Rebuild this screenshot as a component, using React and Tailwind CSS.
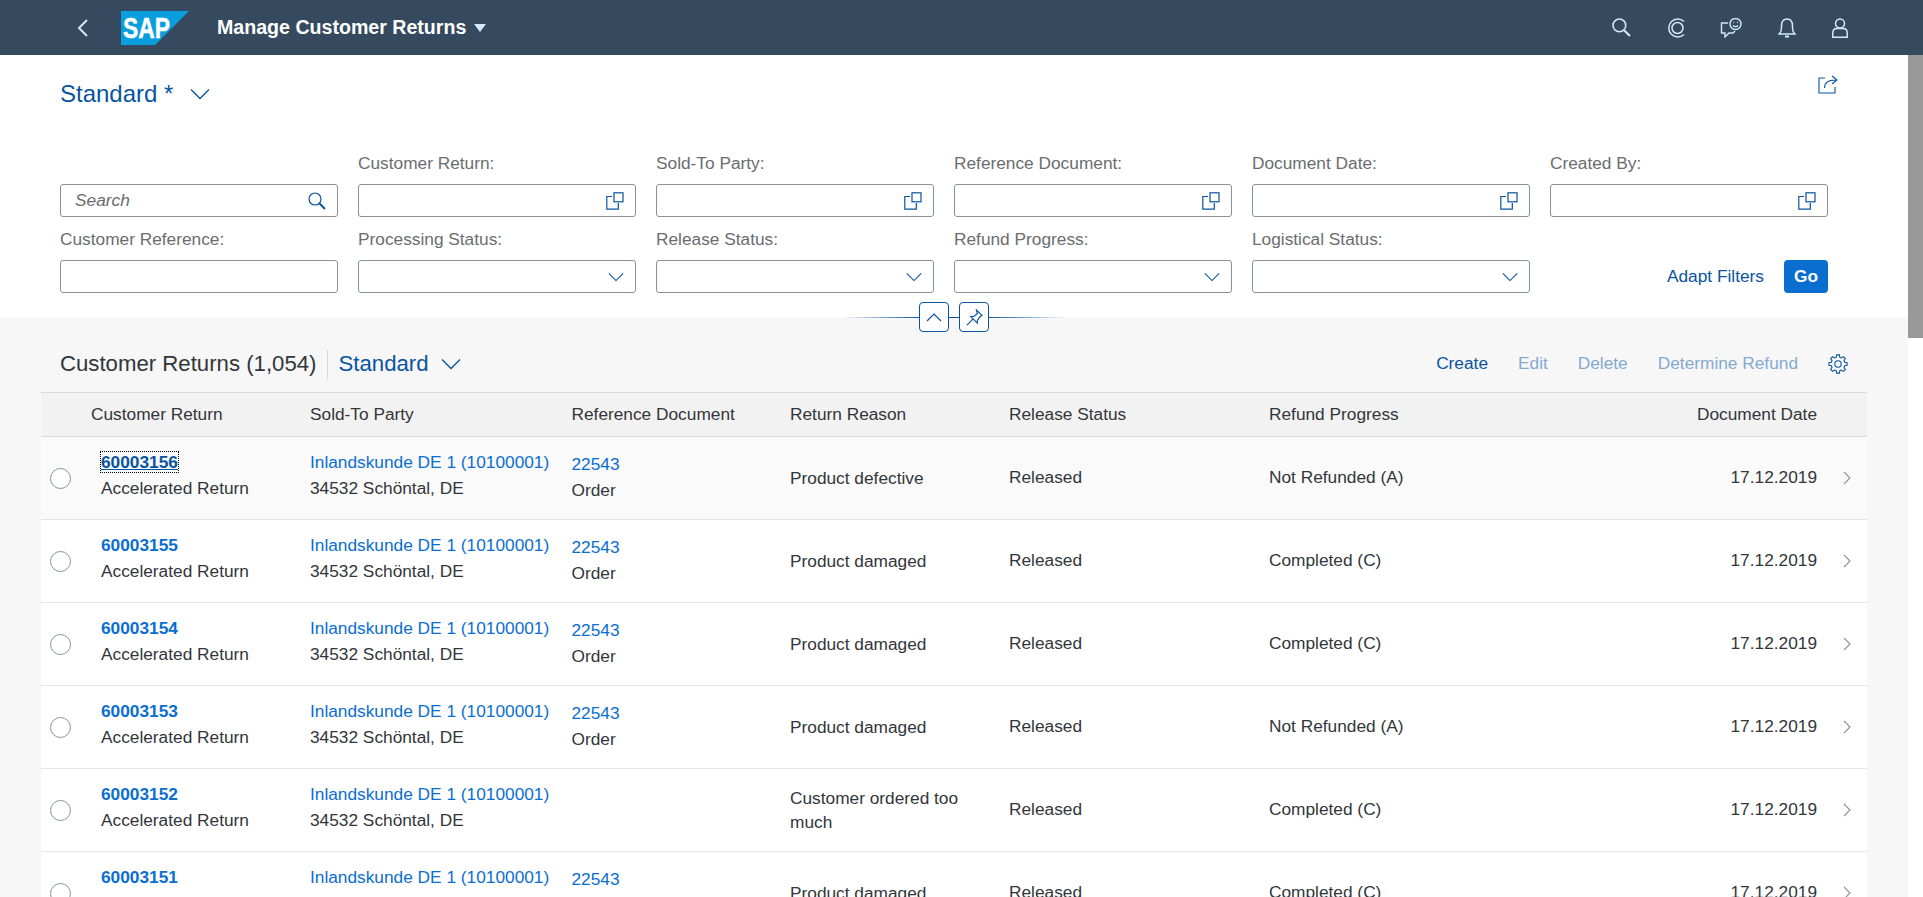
import React from "react";

const COLS =
  "grid grid-cols-[50px_219px_261.5px_218.5px_219px_260px_231px_317px_50px] items-center";

const rows = [
  { id: "60003156", ref: true, reason: "Product defective", refund: "Not Refunded (A)", focus: true },
  { id: "60003155", ref: true, reason: "Product damaged", refund: "Completed (C)" },
  { id: "60003154", ref: true, reason: "Product damaged", refund: "Completed (C)" },
  { id: "60003153", ref: true, reason: "Product damaged", refund: "Not Refunded (A)" },
  { id: "60003152", ref: false, reason: "Customer ordered too much", refund: "Completed (C)" },
  { id: "60003151", ref: true, reason: "Product damaged", refund: "Completed (C)" },
];

const filters = [
  { label: "", type: "search" },
  { label: "Customer Return:", type: "help" },
  { label: "Sold-To Party:", type: "help" },
  { label: "Reference Document:", type: "help" },
  { label: "Document Date:", type: "help" },
  { label: "Created By:", type: "help" },
  { label: "Customer Reference:", type: "text" },
  { label: "Processing Status:", type: "select" },
  { label: "Release Status:", type: "select" },
  { label: "Refund Progress:", type: "select" },
  { label: "Logistical Status:", type: "select" },
];

const Chevron = ({ className = "w-5 h-3" }) => (
  <svg viewBox="0 0 20 12" className={className} fill="none" stroke="#0854a0" strokeWidth="1.3">
    <path d="M1 1.500l9 9 9-9" />
  </svg>
);

const ValueHelp = () => (
  <svg viewBox="0 0 18 18" className="w-[18px] h-[18px]" fill="none" stroke="#0854a0" strokeWidth="1.2">
    <path d="M6 4.500H.8v12.700h11.500V11" />
    <rect x="8" y=".8" width="9" height="9" />
  </svg>
);

const SearchIcon = ({ color = "#0854a0", className = "w-[18px] h-[18px]", sw = "1.2" }) => (
  <svg viewBox="0 0 18 18" className={className} fill="none" stroke={color} strokeWidth={sw}>
    <circle cx="7" cy="7" r="6" />
    <path d="M11.500 11.500l5.500 5.500" strokeWidth="2" />
  </svg>
);

const Logo = () => (
  <svg viewBox="0 0 68 34" className="w-[68px] h-[34px]">
    <path d="M0 0h68L34 34H0z" fill="#0a9fdc" />
    <text
      x="2"
      y="27"
      fontFamily="Liberation Sans"
      fontWeight="700"
      fontSize="29"
      textLength="47"
      lengthAdjust="spacingAndGlyphs"
      stroke="#fff"
      strokeWidth=".5"
      fill="#fff"
    >
      SAP
    </text>
  </svg>
);

const Field = ({ label, type }) => (
  <div>
    <div className="h-[43px] flex items-end pb-[10px] text-[#6a6d70] leading-[22px]">{label}</div>
    <div className="h-[33px] bg-white border border-[#89919a] rounded-[3px] flex items-center justify-end pr-[11px]">
      {type === "search" && (
        <span className="flex-1 pl-[14px] italic text-[#6a6d70]">Search</span>
      )}
      {type === "search" && <SearchIcon />}
      {type === "help" && <ValueHelp />}
      {type === "select" && <Chevron className="w-[16px] h-[10px]" />}
    </div>
  </div>
);

const Row = ({ row }) => (
  <div className={`${COLS} h-[83px] border-b border-[#e5e5e5] text-[#32363a] ${row.focus ? "bg-[#fafafa]" : "bg-white"}`}>
    <div className="pl-[9px]">
      <div className="w-[21px] h-[21px] rounded-full border border-[#89919a] bg-white" />
    </div>
    <div className="pl-[10px] pb-[7px] leading-[26px]">
      <div>
        <span
          className={
            row.focus
              ? "font-bold text-[#0854a0] underline outline-1 outline-dotted outline-black"
              : "font-bold text-[#0a6ed1]"
          }
        >
          {row.id}
        </span>
      </div>
      <div>Accelerated Return</div>
    </div>
    <div className="pb-[7px] leading-[26px]">
      <div className="text-[#0a6ed1]">Inlandskunde DE 1 (10100001)</div>
      <div>34532 Schöntal, DE</div>
    </div>
    <div className="pb-[2px] leading-[26px]">
      {row.ref && <div className="text-[#0a6ed1]">22543</div>}
      {row.ref && <div>Order</div>}
    </div>
    <div className="pr-8 pb-px leading-[24px]">{row.reason}</div>
    <div>Released</div>
    <div>{row.refund}</div>
    <div className="text-right">17.12.2019</div>
    <div className="pl-[26px]">
      <svg viewBox="0 0 8 14" className="w-2 h-[14px]" fill="none" stroke="#89919a" strokeWidth="1.1">
        <path d="M1 1l6 6-6 6" />
      </svg>
    </div>
  </div>
);

export default function App() {
  return (
    <div className="h-screen overflow-hidden flex flex-col bg-white font-['Liberation_Sans',sans-serif] text-[17.3px]">
      {/* shell bar */}
      <header className="h-[55px] shrink-0 bg-[#354a5f] flex items-center pr-[75px]">
        <svg viewBox="0 0 11 18" className="ml-[77px] w-[11px] h-[18px]" fill="none" stroke="#d1e8ff" strokeWidth="2">
          <path d="M10 1L2 9l8 8" />
        </svg>
        <div className="ml-[33px]">
          <Logo />
        </div>
        <div className="ml-7 font-bold text-white text-[19.6px]">Manage Customer Returns</div>
        <div className="ml-[8px] w-0 h-0 border-x-[6px] border-x-transparent border-t-[8px] border-t-[#d1e8ff]" />
        <div className="ml-auto flex items-center gap-9">
          <SearchIcon color="#d1e8ff" className="w-[19px] h-[19px]" sw="1.5" />
          <svg viewBox="0 0 20 20" className="w-5 h-5" fill="none" stroke="#d1e8ff" strokeWidth="1.5">
            <path d="M17 3.500A9 9 0 1 0 17 16.500" />
            <circle cx="10.500" cy="10" r="5.500" />
          </svg>
          <svg viewBox="0 0 22 20" className="-ml-[3px] w-[22px] h-5" fill="none" stroke="#d1e8ff" strokeWidth="1.4">
            <path d="M8 5H1.500v10H5v4l4-4h4l2-2" />
            <circle cx="15.500" cy="6" r="5.500" />
            <path d="M13 7.500c1.200 1.500 3.800 1.500 5 0M13.500 4.500h.8M17 4.500h.8" />
          </svg>
          <svg viewBox="0 0 18 21" className="w-[18px] h-[21px]" fill="none" stroke="#d1e8ff" strokeWidth="1.5">
            <path d="M1 17c2-2 2.500-3 2.500-8S6 2 9 2s5.500 2 5.500 7 .5 6 2.500 8z" />
            <path d="M7 19.500h4" strokeWidth="2" />
          </svg>
          <svg viewBox="0 0 16 20" className="w-4 h-5" fill="none" stroke="#d1e8ff" strokeWidth="1.5">
            <circle cx="8" cy="5.500" r="4.500" />
            <path d="M.8 19.300V15c0-3 2-4.500 4.200-4.500h6c2.200 0 4.200 1.500 4.200 4.500v4.300z" />
          </svg>
        </div>
      </header>

      <div className="flex-1 min-h-0 flex">
        <main className="flex-1 min-w-0 bg-[#f7f7f7] overflow-hidden">
          {/* filter bar */}
          <section className="relative h-[263px] bg-white px-[60px] pr-[80px] pt-5">
            <div className="flex items-start justify-between h-[66px]">
              <div className="mt-px flex items-center gap-[17px] text-[#0854a0] text-[24px] leading-9">
                <span>Standard *</span>
                <Chevron />
              </div>
              <svg viewBox="0 0 20 20" className="mr-[-10px] -mt-[1px] w-5 h-5" fill="none" stroke="#0854a0" strokeWidth="1.1">
                <path d="M7 4H1v15h16v-6" />
                <path d="M6.500 14c0-5 3.500-8 11-8M14 2l5 4-5 4" />
              </svg>
            </div>
            <div className="grid grid-cols-[repeat(6,278px)] gap-x-5">
              {filters.map((f, i) => (
                <Field key={i} label={f.label} type={f.type} />
              ))}
              <div className="flex items-end justify-end gap-5">
                <span className="text-[#0854a0] h-[33px] leading-[33px]">Adapt Filters</span>
                <span className="w-11 h-[33px] bg-[#0a6ed1] rounded-[4px] text-white font-bold flex items-center justify-center">
                  Go
                </span>
              </div>
            </div>

            {/* collapse line + buttons sit over the section edge */}
            <div className="absolute left-[840px] w-[228px] bottom-0 h-px bg-[linear-gradient(90deg,transparent,#0854a0_35%,#0854a0_65%,transparent)]" />
            <div className="absolute left-[919px] -bottom-[14px] flex gap-[10px]">
              <div className="w-[30px] h-[30px] bg-white border border-[#0854a0] rounded-[4px] flex items-center justify-center">
                <svg viewBox="0 0 16 9" className="w-4 h-[9px]" fill="none" stroke="#0854a0" strokeWidth="1.2">
                  <path d="M1 8l7-7 7 7" />
                </svg>
              </div>
              <div className="w-[30px] h-[30px] bg-white border border-[#0854a0] rounded-[4px] flex items-center justify-center">
                <svg viewBox="0 0 18 18" className="w-[17px] h-[17px]" fill="none" stroke="#0854a0" strokeWidth="1.2">
                  <path d="M11 1l6 6-2 1-3 4 0 3-7-7 3 0 4-3zM7.500 10.500L1 17" />
                </svg>
              </div>
            </div>
          </section>

          {/* table */}
          <section className="mx-[41px] w-[1826px] pt-[30px]">
            <div className="h-[32px] mb-[12px] flex items-center px-[19px]">
              <span className="text-[#32363a] text-[22.2px]">Customer Returns (1,054)</span>
              <span className="ml-[10px] w-px h-[29px] bg-[#d9d9d9]" />
              <span className="ml-[11px] text-[#0854a0] text-[22.2px]">Standard</span>
              <span className="ml-[12px]">
                <Chevron />
              </span>
              <div className="ml-auto flex items-center gap-[30px]">
                <span className="text-[#0854a0]">Create</span>
                <span className="text-[#84aad0]">Edit</span>
                <span className="text-[#84aad0]">Delete</span>
                <span className="text-[#84aad0]">Determine Refund</span>
                <svg viewBox="0 0 22 22" className="w-5 h-5" fill="none" stroke="#0854a0" strokeWidth="1.2">
                  <circle cx="11" cy="11" r="3.500" />
                  <path d="M9.500 1h3l.5 2.600 1.800.8 2.200-1.500 2.100 2.100-1.500 2.200.8 1.800 2.600.5v3l-2.600.5-.8 1.800 1.500 2.200-2.100 2.100-2.200-1.500-1.800.8-.5 2.600h-3l-.5-2.600-1.800-.8-2.200 1.500-2.100-2.100 1.500-2.200-.8-1.800L1 12.500v-3l2.600-.5.8-1.800-1.500-2.200 2.100-2.100 2.200 1.500 1.800-.8z" />
                </svg>
              </div>
            </div>
            <div className={`${COLS} h-[45px] bg-[#f2f2f2] border-y border-[#d9d9d9] text-[#32363a]`}>
              <div />
              <div>Customer Return</div>
              <div>Sold-To Party</div>
              <div>Reference Document</div>
              <div>Return Reason</div>
              <div>Release Status</div>
              <div>Refund Progress</div>
              <div className="text-right">Document Date</div>
              <div />
            </div>
            {rows.map((r) => (
              <Row key={r.id} row={r} />
            ))}
          </section>
        </main>

        {/* scrollbar */}
        <div className="w-[15px] shrink-0 bg-white">
          <div className="h-[283px] bg-[#999999]" />
        </div>
      </div>
    </div>
  );
}
